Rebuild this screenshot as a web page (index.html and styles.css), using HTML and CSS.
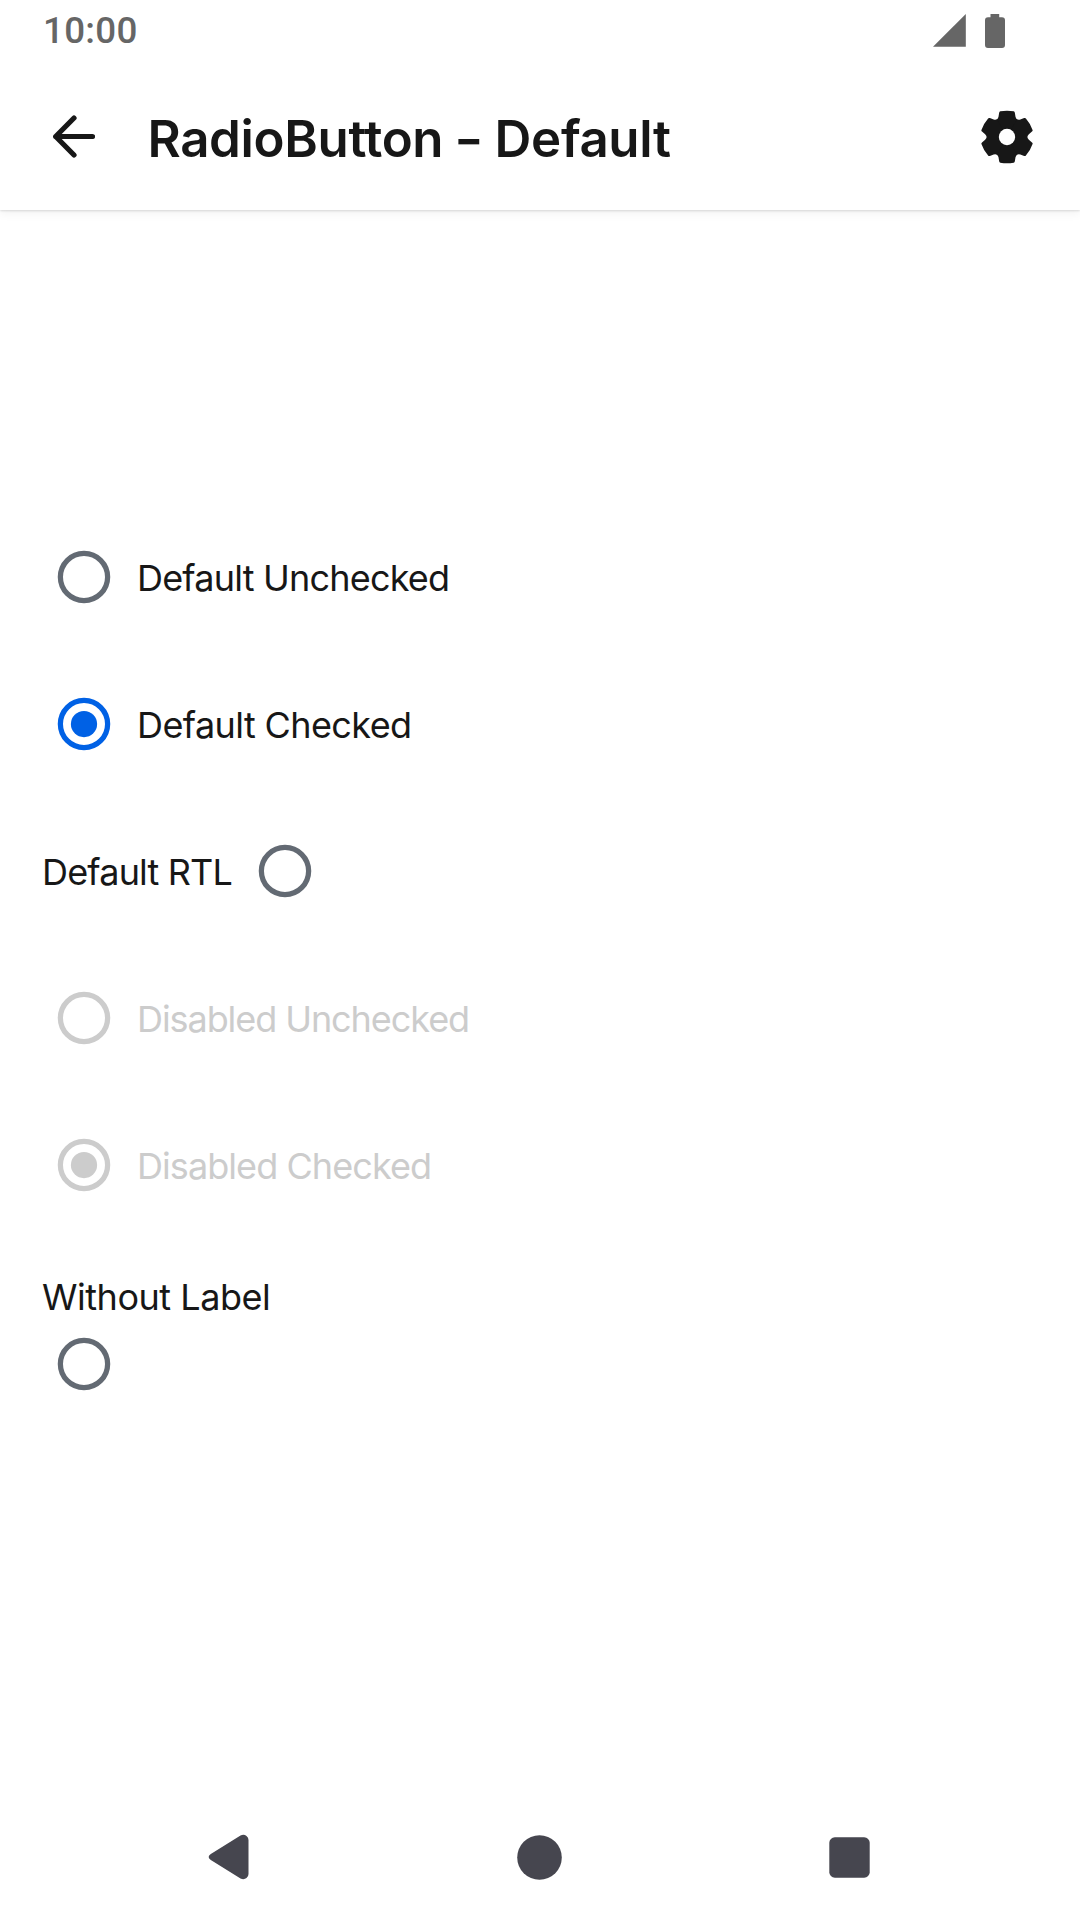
FILE: index.html
```html
<!DOCTYPE html>
<html lang="en">
<head>
<meta charset="utf-8">
<title>RadioButton - Default</title>
<link rel="stylesheet" href="styles.css">
</head>
<body>
<div class="screen">
  <div class="status">
    <span class="clock">10:00</span>
    <svg class="status-icons" width="73" height="36" viewBox="0 0 73 36">
      <path d="M1 34.8L33.8 2V34.8Z"/>
      <path d="M58.5 2H67.2V5.3H70a3 3 0 0 1 3 3V33a3 3 0 0 1-3 3H56a3 3 0 0 1-3-3V8.300a3 3 0 0 1 3-3H58.500Z"/>
    </svg>
  </div>
  <header class="appbar">
    <svg class="back" width="42" height="43" viewBox="0 0 42 43"><path d="M21 3L2.700 21.500L21 40M2.700 21.500H39.500"/></svg>
    <h1 class="title">RadioButton <span class="dash">-</span> Default</h1>
    <svg class="gear" width="54" height="54" viewBox="-81 -81 162 162">
      <defs><path id="tooth" d="M0 0L-30.500-53Q-27-55-25.500-61L-23.500-73Q-23-76.500-20-77Q0-81 20-77Q23-76.500 23.500-73L25.500-61Q27-55 30.500-53Z"/></defs>
      <circle r="60"/>
      <use href="#tooth"/><use href="#tooth" transform="rotate(60)"/><use href="#tooth" transform="rotate(120)"/><use href="#tooth" transform="rotate(180)"/><use href="#tooth" transform="rotate(240)"/><use href="#tooth" transform="rotate(300)"/>
      <circle class="hole" r="24.500"/>
    </svg>
  </header>
  <main class="content">
    <div class="row"><svg class="radio" viewBox="0 0 32 32"><circle cx="16" cy="16" r="9"/></svg><span class="label l1">Default Unchecked</span></div>
    <div class="row checked"><svg class="radio" viewBox="0 0 32 32"><circle cx="16" cy="16" r="9"/><circle class="dot" cx="16" cy="16" r="5"/></svg><span class="label l2">Default Checked</span></div>
    <div class="row rtl"><svg class="radio" viewBox="0 0 32 32"><circle cx="16" cy="16" r="9"/></svg><span class="label l3">Default RTL</span></div>
    <div class="row disabled"><svg class="radio" viewBox="0 0 32 32"><circle cx="16" cy="16" r="9"/></svg><span class="label l4">Disabled Unchecked</span></div>
    <div class="row disabled"><svg class="radio" viewBox="0 0 32 32"><circle cx="16" cy="16" r="9"/><circle class="dot" cx="16" cy="16" r="5"/></svg><span class="label l5">Disabled Checked</span></div>
    <div class="unlabelled"><span class="label l6">Without Label</span><svg class="radio" viewBox="0 0 32 32"><circle cx="16" cy="16" r="9"/></svg></div>
  </main>
  <nav class="navbar">
    <svg width="42" height="46" viewBox="0 0 42 46"><path d="M2.800 20L32.500 1.500Q36 0 38.500 2Q40.500 3.500 40.500 6V40Q40.500 42.500 38.500 44Q36 46 32.500 44.500L2.800 26Q-1.500 23 2.800 20Z"/></svg>
    <svg width="46" height="46" viewBox="0 0 46 46"><circle cx="22.500" cy="23.500" r="22.300"/></svg>
    <svg width="42" height="46" viewBox="0 0 42 46"><rect x=".3" y="3.300" width="40.400" height="40.400" rx="5.500"/></svg>
  </nav>
</div>
</body>
</html>
```
FILE: styles.css
```css
* { box-sizing: border-box; }
body { margin: 0; background: #fff; }
svg { display: block; flex: none; fill: currentColor; }
.screen {
  width: 1080px;
  height: 1920px;
  display: flex;
  flex-direction: column;
  background: #fff;
  color: #171717;
  font-family: Inter, "Liberation Sans", sans-serif;
}
.status {
  height: 63px;
  padding: 0 75px 0 43px;
  display: flex;
  justify-content: space-between;
  color: #666;
}
.clock { font: 500 36.75px/62px Roboto, sans-serif; letter-spacing: .3px; }
.status-icons { margin-top: 12px; }
.appbar {
  height: 147px;
  padding: 0 46.5px 0 52.5px;
  display: flex;
  align-items: center;
  box-shadow: 0 1px 2px rgba(0, 0, 0, .12), 0 3px 10px rgba(0, 0, 0, .06);
  clip-path: inset(0 0 -20px);
}
.back { fill: none; stroke: currentColor; stroke-width: 5.2; stroke-linecap: round; stroke-linejoin: round; }
.title {
  margin: 0 auto 0 53px;
  padding-top: 4px;
  font-size: 51px;
  font-weight: 600;
  line-height: 60px;
  letter-spacing: -.35px;
  white-space: nowrap;
}
.dash { display: inline-block; margin: 0 1.5px; transform: scaleX(1.25); }
.hole { fill: #fff; }
.content {
  flex: 1;
  padding: 293px 42px 0;
}
.row {
  height: 147px;
  display: flex;
  align-items: center;
  gap: 11px;
}
.rtl { flex-direction: row-reverse; justify-content: flex-end; }
.label { padding-top: 3px; font-size: 36px; line-height: 50px; white-space: nowrap; }
.l1 { letter-spacing: -.8px; }
.l2 { letter-spacing: -.6px; }
.l3 { letter-spacing: -.83px; }
.l4 { letter-spacing: -1.07px; }
.l5 { letter-spacing: -.93px; }
.l6 { letter-spacing: -.47px; }
.radio { width: 84px; height: 84px; fill: none; stroke: #636a73; stroke-width: 2; }
.dot { fill: currentColor; stroke: none; }
.checked .radio { color: #0061e5; stroke: #0061e5; }
.disabled { color: #ccc; }
.disabled .radio { stroke: #ccc; }
.unlabelled { padding-top: 31px; display: flex; flex-direction: column; align-items: flex-start; }
.navbar {
  height: 126px;
  padding: 0 209px 0 208px;
  display: flex;
  align-items: center;
  justify-content: space-between;
  color: #46464f;
}
```
